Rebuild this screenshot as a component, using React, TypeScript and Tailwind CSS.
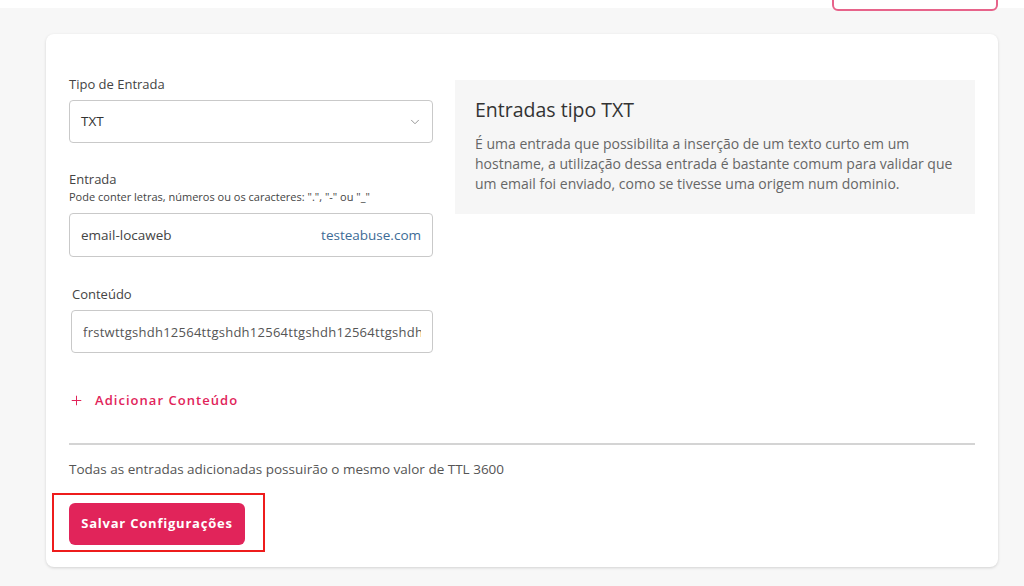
import { ChevronDown, Plus } from 'lucide-react';

const font = { fontFamily: '"Open Sans", "Noto Sans", sans-serif' };

export default function App() {
  return (
    <div className="w-[1024px] h-[586px] bg-[#f7f7f7] overflow-hidden text-[#444]" style={font}>
      {/* top bar, mostly scrolled out of view */}
      <div className="h-[8px] bg-white relative">
        <div className="absolute right-[26px] top-[-30px] w-[166px] h-[41px] rounded-[6px] border-2 border-[#e7638a] bg-white" />
      </div>

      {/* card */}
      <div className="ml-[46px] mt-[26px] w-[952px] h-[533px] bg-white rounded-[8px] shadow-[0_1px_3px_rgba(0,0,0,0.15)] px-[23px] pt-[42px]">
        <div className="flex gap-[22px]">
          {/* form */}
          <div className="w-[364px] flex flex-col">
            <label className="text-[13px] leading-[16px] text-[#444]">Tipo de Entrada</label>
            <div className="mt-[8px] h-[43px] border border-[#c9c9c9] rounded-[4px] flex items-center justify-between pl-[11px] pr-[10px]">
              <span className="text-[13.5px] text-[#333]">TXT</span>
              <ChevronDown className="w-[14px] h-[14px] text-[#888]" strokeWidth={1.5} />
            </div>

            <label className="mt-[28px] text-[13px] leading-[16px] text-[#444]">Entrada</label>
            <p className="mt-[3px] text-[11px] leading-[14px] text-[#444]">
              Pode conter letras, números ou os caracteres: ".", "-" ou "_"
            </p>
            <div className="mt-[9px] h-[44px] border border-[#c9c9c9] rounded-[4px] flex items-center justify-between px-[11px]">
              <span className="text-[13.5px] text-[#444]">email-locaweb</span>
              <span className="text-[13.5px] text-[#3d6b96]">testeabuse.com</span>
            </div>

            <label className="mt-[29px] ml-[3px] text-[13px] leading-[16px] text-[#444]">Conteúdo</label>
            <input
              readOnly
              value="frstwttgshdh12564ttgshdh12564ttgshdh12564ttgshdh12564"
              className="mt-[8px] ml-[2px] w-[362px] h-[43px] border border-[#c9c9c9] rounded-[4px] px-[11px] text-[13px] tracking-[0.02em] text-[#555] outline-none"
              style={font}
            />

            <button className="mt-[39px] flex items-center gap-[11px] text-[#e1245a] text-[13px] leading-[16px] font-semibold tracking-[0.08em]">
              <Plus className="w-[15px] h-[15px]" strokeWidth={1.6} />
              Adicionar Conteúdo
            </button>
          </div>

          {/* info box */}
          <div className="mt-[4px] w-[520px] h-[134px] bg-[#f6f6f6] pl-[20px] pr-[16px] pt-[18px]">
            <h2 className="text-[19.5px] leading-[24px] font-medium text-[#333]">Entradas tipo TXT</h2>
            <p className="mt-[12px] text-[14px] leading-[20px] text-[#666]">
              É uma entrada que possibilita a inserção de um texto curto em um hostname, a utilização dessa entrada é bastante comum para validar que um email foi enviado, como se tivesse uma origem num dominio.
            </p>
          </div>
        </div>

        <div className="mt-[35px] h-[2px] bg-[#d4d4d4]" />

        <p className="mt-[16px] text-[13.5px] leading-[16px] text-[#555]">
          Todas as entradas adicionadas possuirão o mesmo valor de TTL 3600
        </p>

        <div className="mt-[16px] -ml-[17px] w-[213px] h-[59px] border-2 border-[#ee1c1c] pl-[15px] pt-[8px]">
          <button className="w-[176px] h-[42px] rounded-[6px] bg-[#e1245a] text-white text-[13px] font-bold tracking-[0.06em]">
            Salvar Configurações
          </button>
        </div>
      </div>
    </div>
  );
}
